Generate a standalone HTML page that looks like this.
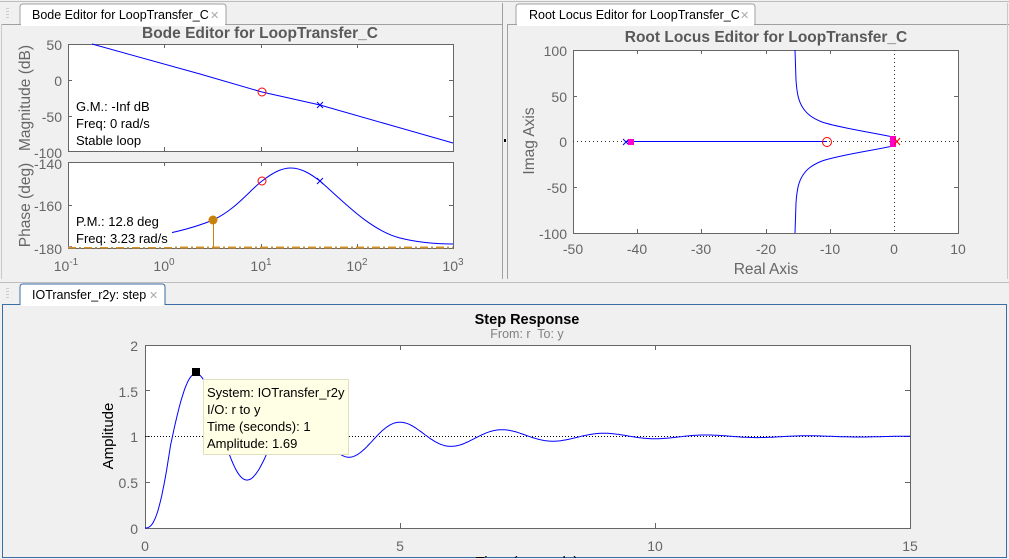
<!DOCTYPE html>
<html><head><meta charset="utf-8"><style>
html,body{margin:0;padding:0;background:#f0f0f0;width:1009px;height:559px;overflow:hidden}
svg{display:block;font-family:"Liberation Sans",sans-serif}
</style></head><body>
<svg width="1009" height="559" viewBox="0 0 1009 559" xmlns="http://www.w3.org/2000/svg">
<rect width="1009" height="559" fill="#f0f0f0"/>
<line x1="0" y1="1.5" x2="1009" y2="1.5" stroke="#bdbdbd"/>
<line x1="2" y1="24.5" x2="502" y2="24.5" stroke="#a0a0a0"/>
<line x1="502.5" y1="3" x2="502.5" y2="279" stroke="#a0a0a0"/>
<line x1="1.5" y1="24" x2="1.5" y2="279" stroke="#c8c8c8"/>
<path d="M20,24 L20,7 Q20,4 23,4 L223,4 Q226,4 226,7 L226,24" fill="#fff" stroke="#a0a0a0"/>
<rect x="21" y="22" width="204" height="4" fill="#fff"/>
<text x="32" y="19" font-size="12.5" fill="#000">Bode Editor for LoopTransfer_C</text>
<text x="210" y="19" font-size="11" fill="#aaa">✕</text>
<g fill="#ccc"><rect x="6" y="8" width="3" height="1"/><rect x="6" y="11" width="3" height="1"/><rect x="6" y="14" width="3" height="1"/><rect x="6" y="17" width="3" height="1"/></g>
<text x="260" y="38" font-size="15.5" font-weight="bold" fill="#595959" text-anchor="middle">Bode Editor for LoopTransfer_C</text>
<rect x="68.5" y="44.5" width="385" height="107" fill="#fff" stroke="#666"/>
<g stroke="#666"><line x1="164.5" y1="44" x2="164.5" y2="48"/><line x1="261.5" y1="44" x2="261.5" y2="48"/><line x1="357.5" y1="44" x2="357.5" y2="48"/>
<line x1="164.5" y1="151" x2="164.5" y2="147"/><line x1="261.5" y1="151" x2="261.5" y2="147"/><line x1="357.5" y1="151" x2="357.5" y2="147"/>
<line x1="68" y1="80.5" x2="72" y2="80.5"/><line x1="68" y1="116.5" x2="72" y2="116.5"/><line x1="453" y1="80.5" x2="449" y2="80.5"/><line x1="453" y1="116.5" x2="449" y2="116.5"/></g>
<polyline points="92,44 200,74 262,92 320,105 453,143" fill="none" stroke="#0000ff" stroke-width="1"/>
<circle cx="262" cy="92" r="4" fill="none" stroke="#ff0000"/>
<path d="M317,102 L323,108 M323,102 L317,108" stroke="#0000ff"/>
<rect x="72" y="97" width="82" height="54" fill="#fff"/>
<g font-size="13" fill="#000"><text x="76" y="111">G.M.: -Inf dB</text><text x="76" y="128">Freq: 0 rad/s</text><text x="76" y="145">Stable loop</text></g>
<g font-size="14" fill="#666" text-anchor="end"><text x="62" y="50">50</text><text x="62" y="86">0</text><text x="62" y="122">-50</text><text x="62" y="158">-100</text>
<text x="62" y="169">-140</text><text x="62" y="211">-160</text><text x="62" y="254">-180</text></g>
<text transform="translate(30,98) rotate(-90)" font-size="15.5" fill="#666" text-anchor="middle">Magnitude (dB)</text>
<text transform="translate(30,205) rotate(-90)" font-size="15.5" fill="#666" text-anchor="middle">Phase (deg)</text>
<rect x="68.5" y="162.5" width="385" height="86" fill="#fff" stroke="#666"/>
<g stroke="#666"><line x1="164.5" y1="162" x2="164.5" y2="166"/><line x1="261.5" y1="162" x2="261.5" y2="166"/><line x1="357.5" y1="162" x2="357.5" y2="166"/>
<line x1="164.5" y1="248" x2="164.5" y2="244"/><line x1="261.5" y1="248" x2="261.5" y2="244"/><line x1="357.5" y1="248" x2="357.5" y2="244"/>
<line x1="68" y1="205.5" x2="72" y2="205.5"/><line x1="453" y1="205.5" x2="449" y2="205.5"/></g>
<path d="M68,247 C130,242 180,234 213,220 C235,210 248,192 262,181 C275,171 283,168 291,168 C302,168 312,175 320,181 C345,203 370,230 400,238 C420,243 440,244 453,244" fill="none" stroke="#0000ff"/>
<line x1="68" y1="247.5" x2="453" y2="247.5" stroke="#d4902a" stroke-width="2" stroke-dasharray="8,3,2,3"/>
<line x1="213.5" y1="220" x2="213.5" y2="248" stroke="#c8820a"/>
<circle cx="213" cy="220" r="4.5" fill="#c8820a"/>
<circle cx="262" cy="181" r="4" fill="none" stroke="#ff0000"/>
<path d="M317,178 L323,184 M323,178 L317,184" stroke="#0000ff"/>
<rect x="72" y="212" width="100" height="35" fill="#fff"/>
<g font-size="13" fill="#000"><text x="76" y="226">P.M.: 12.8 deg</text><text x="76" y="243">Freq: 3.23 rad/s</text></g>
<g font-size="14" fill="#666" text-anchor="middle">
<text x="66" y="271">10<tspan font-size="10" dy="-6">-1</tspan></text>
<text x="164" y="271">10<tspan font-size="10" dy="-6">0</tspan></text>
<text x="261" y="271">10<tspan font-size="10" dy="-6">1</tspan></text>
<text x="357" y="271">10<tspan font-size="10" dy="-6">2</tspan></text>
<text x="453" y="271">10<tspan font-size="10" dy="-6">3</tspan></text></g>
<rect x="504" y="139" width="2" height="3" fill="#000"/>
<line x1="508" y1="24.5" x2="1009" y2="24.5" stroke="#a0a0a0"/>
<line x1="507.5" y1="24" x2="507.5" y2="279" stroke="#a0a0a0"/>
<line x1="1007.5" y1="3" x2="1007.5" y2="279" stroke="#c8c8c8"/>
<path d="M516,24 L516,7 Q516,4 519,4 L752,4 Q755,4 755,7 L755,24" fill="#fff" stroke="#a0a0a0"/>
<rect x="517" y="22" width="237" height="4" fill="#fff"/>
<text x="529" y="19" font-size="12.5" fill="#000">Root Locus Editor for LoopTransfer_C</text>
<text x="740" y="19" font-size="11" fill="#aaa">✕</text>
<text x="766" y="42" font-size="15.5" font-weight="bold" fill="#595959" text-anchor="middle">Root Locus Editor for LoopTransfer_C</text>
<rect x="573.5" y="50.5" width="385" height="183" fill="#fff" stroke="#666"/>
<g stroke="#666"><line x1="637.5" y1="50" x2="637.5" y2="54"/><line x1="701.5" y1="50" x2="701.5" y2="54"/><line x1="766.5" y1="50" x2="766.5" y2="54"/><line x1="830.5" y1="50" x2="830.5" y2="54"/>
<line x1="637.5" y1="233" x2="637.5" y2="229"/><line x1="701.5" y1="233" x2="701.5" y2="229"/><line x1="766.5" y1="233" x2="766.5" y2="229"/><line x1="830.5" y1="233" x2="830.5" y2="229"/>
<line x1="573" y1="96.5" x2="577" y2="96.5"/><line x1="573" y1="187.5" x2="577" y2="187.5"/><line x1="958" y1="96.5" x2="954" y2="96.5"/><line x1="958" y1="187.5" x2="954" y2="187.5"/></g>
<line x1="573" y1="141.5" x2="958" y2="141.5" stroke="#333" stroke-dasharray="1,3"/>
<line x1="894.5" y1="50" x2="894.5" y2="233" stroke="#333" stroke-dasharray="1,3"/>
<line x1="626" y1="141.5" x2="827" y2="141.5" stroke="#0000ff"/>
<path d="M795,50 L796,80 C797,95 799,102 803,108 C807,114 812,118 822,122 C840,128 870,132 893,137" fill="none" stroke="#0000ff"/>
<path d="M795,233 L796,203 C797,188 799,181 803,175 C807,169 812,165 822,161 C840,155 870,151 893,146" fill="none" stroke="#0000ff"/>
<circle cx="827" cy="142" r="4.5" fill="none" stroke="#ff0000"/>
<path d="M623,139 L629,145 M629,139 L623,145" stroke="#0000ff"/>
<rect x="628" y="139" width="6" height="6" fill="#ff00cc"/>
<rect x="890" y="136" width="6" height="11" fill="#ff00cc"/>
<path d="M894,138 L900,145 M900,138 L894,145" stroke="#ff0000"/>
<g font-size="14" fill="#666" text-anchor="end"><text x="567" y="56">100</text><text x="567" y="102">50</text><text x="567" y="147">0</text><text x="567" y="193">-50</text><text x="567" y="239">-100</text></g>
<g font-size="14" fill="#666" text-anchor="middle"><text x="573" y="254">-50</text><text x="637" y="254">-40</text><text x="701" y="254">-30</text><text x="766" y="254">-20</text><text x="830" y="254">-10</text><text x="894" y="254">0</text><text x="958" y="254">10</text></g>
<text x="766" y="274" font-size="15.5" fill="#666" text-anchor="middle">Real Axis</text>
<text transform="translate(534,141) rotate(-90)" font-size="15.5" fill="#666" text-anchor="middle">Imag Axis</text>
<line x1="0" y1="282.5" x2="1009" y2="282.5" stroke="#bdbdbd"/>
<rect x="2.5" y="304.5" width="1004" height="253" fill="#f0f0f0" stroke="#3a6ea5"/>
<path d="M20,305 L20,287 Q20,284 23,284 L162,284 Q165,284 165,287 L165,305" fill="#fff" stroke="#3a6ea5"/>
<rect x="21" y="303" width="143" height="3" fill="#fff"/>
<text x="32" y="299" font-size="12.5" fill="#000">IOTransfer_r2y: step</text>
<text x="149" y="299" font-size="11" fill="#aaa">✕</text>
<g fill="#ccc"><rect x="6" y="288" width="3" height="1"/><rect x="6" y="291" width="3" height="1"/><rect x="6" y="294" width="3" height="1"/><rect x="6" y="297" width="3" height="1"/></g>
<text x="527" y="324" font-size="14.5" font-weight="bold" fill="#000" text-anchor="middle">Step Response</text>
<text x="527" y="338" font-size="12.5" fill="#808080" text-anchor="middle" xml:space="preserve">From: r  To: y</text>
<rect x="145.5" y="345.5" width="765" height="183" fill="#fff" stroke="#666"/>
<g stroke="#666"><line x1="400.5" y1="345" x2="400.5" y2="350"/><line x1="655.5" y1="345" x2="655.5" y2="350"/><line x1="400.5" y1="528" x2="400.5" y2="523"/><line x1="655.5" y1="528" x2="655.5" y2="523"/>
<line x1="145" y1="390.5" x2="150" y2="390.5"/><line x1="145" y1="436.5" x2="150" y2="436.5"/><line x1="145" y1="482.5" x2="150" y2="482.5"/>
<line x1="910" y1="390.5" x2="905" y2="390.5"/><line x1="910" y1="436.5" x2="905" y2="436.5"/><line x1="910" y1="482.5" x2="905" y2="482.5"/></g>
<line x1="145" y1="436.5" x2="910" y2="436.5" stroke="#000" stroke-dasharray="1,2"/>
<path id="step" d="" fill="none" stroke="#0000ff"/>
<rect x="192" y="368" width="8" height="8" fill="#000"/>
<rect x="203.5" y="379.5" width="145" height="75" fill="#ffffe6" stroke="#e0e0c0"/>
<g font-size="13" fill="#000"><text x="207" y="397">System: IOTransfer_r2y</text><text x="207" y="414">I/O: r to y</text><text x="207" y="431">Time (seconds): 1</text><text x="207" y="448">Amplitude: 1.69</text></g>
<g font-size="14" fill="#666" text-anchor="end"><text x="138" y="351">2</text><text x="138" y="397">1.5</text><text x="138" y="442">1</text><text x="138" y="488">0.5</text><text x="138" y="534">0</text></g>
<g font-size="14" fill="#666" text-anchor="middle"><text x="145" y="551">0</text><text x="400" y="551">5</text><text x="655" y="551">10</text><text x="910" y="551">15</text></g>
<text x="527" y="567" font-size="15" fill="#000" text-anchor="middle">Time (seconds)</text>
<text transform="translate(113,436) rotate(-90)" font-size="15" fill="#000" text-anchor="middle">Amplitude</text>
<rect x="0" y="558" width="1009" height="1" fill="#f0f0f0"/>
</svg>
<script>
(function(){var s=0.371,w=Math.PI,d="";for(var i=0;i<=600;i++){var t=i*15/600;var y=1-Math.exp(-s*t)*(Math.cos(w*t)+s/w*Math.sin(w*t));if(t<0.5){y=y*Math.pow(t/0.5,0.6)}var x=145+t*51,py=528-y*91.5;d+=(i?"L":"M")+x.toFixed(1)+","+py.toFixed(1);}document.getElementById("step").setAttribute("d",d);})();
</script>
</body></html>
